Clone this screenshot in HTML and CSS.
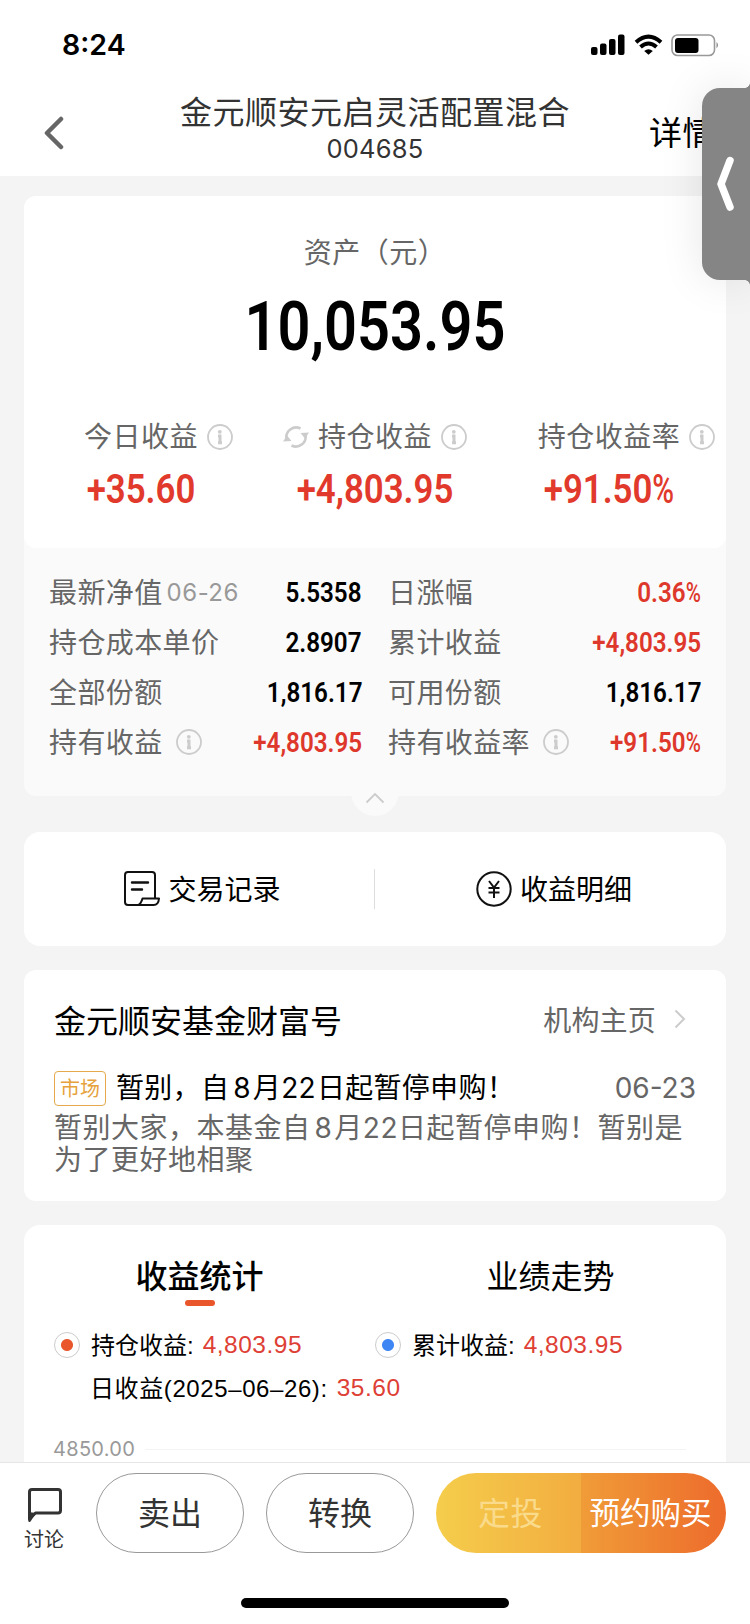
FILE: index.html
```
<!DOCTYPE html>
<html lang="zh-CN">
<head>
    <meta charset="UTF-8">
    <meta name="viewport" content="width=device-width, initial-scale=1.0">
    <title>金元顺安元启灵活配置混合</title>
    <link rel="stylesheet" href="styles.css">
</head>
<body>
    <svg class="defs" width="0" height="0">
        <symbol id="info" viewBox="0 0 26 26">
            <circle cx="13" cy="13" r="12" fill="none" stroke="#ccc" stroke-width="1.8"/>
            <circle cx="12.800" cy="7.800" r="1.9" fill="#ccc"/>
            <path d="M11 12H13V19M11 18.800H15" fill="none" stroke="#ccc" stroke-width="3"/>
        </symbol>
    </svg>

    <header class="header">
        <div class="statusBar">
            <span class="time">8:24</span>
            <div class="statusIcons">
                <svg width="34" height="22" viewBox="0 0 34 22">
                    <rect x="0" y="13" width="6.5" height="8" rx="2"/>
                    <rect x="9" y="9.5" width="6.5" height="11.5" rx="2"/>
                    <rect x="18" y="5" width="6.5" height="16" rx="2"/>
                    <rect x="27" y="0.5" width="6.5" height="20.5" rx="2"/>
                </svg>
                <svg class="wifi" width="29" height="22" viewBox="0 0 29 22">
                    <path d="M2 8.2Q14.500 -3 27 8.200M6.500 13Q14.500 6 22.500 13" fill="none" stroke="#000" stroke-width="4"/>
                    <path d="M14.500 20.800L10.200 17Q14.500 13.400 18.800 17Z"/>
                </svg>
                <svg width="49" height="23" viewBox="0 0 49 23">
                    <rect x="1" y="1" width="42.500" height="20.500" rx="5.500" fill="none" stroke="#999" stroke-width="1.600"/>
                    <rect x="4" y="4" width="23.500" height="15" rx="3"/>
                    <path d="M45.500 8Q48.500 11.200 45.500 14.500Z" fill="#888"/>
                </svg>
            </div>
        </div>
        <div class="navBar">
            <svg class="back" width="20" height="34" viewBox="0 0 20 34">
                <path d="M17 3L3 17L17 31" fill="none" stroke="#666" stroke-width="4.500" stroke-linecap="round" stroke-linejoin="round"/>
            </svg>
            <div class="navTitle">
                <h1>金元顺安元启灵活配置混合</h1>
                <p>004685</p>
            </div>
            <span class="navDetail">详情</span>
        </div>
    </header>

    <main class="content">
        <section class="assetCard">
            <div class="assetTop">
                <p class="assetLabel">资产（元）</p>
                <p class="assetValue num">10,053.95</p>
                <div class="stats">
                    <div class="stat">
                        <div class="statLabel">
                            <span></span>
                            <span>今日收益</span>
                            <svg width="26" height="26"><use href="#info"/></svg>
                        </div>
                        <p class="statValue num">+35.60</p>
                    </div>
                    <div class="stat">
                        <div class="statLabel">
                            <svg class="refresh" width="26" height="24" viewBox="0 0 26 24">
                                <path d="M3.500 14A9.800 9.800 0 0 1 17.500 3.500M22.500 10A9.800 9.800 0 0 1 8.500 20.500" fill="none" stroke="#ccc" stroke-width="2.600"/>
                                <path d="M0 16.500L4 10.500L8.500 16Z M26 7.500L22 13.500L17.500 8Z" fill="#ccc"/>
                            </svg>
                            <span>持仓收益</span>
                            <svg width="26" height="26"><use href="#info"/></svg>
                        </div>
                        <p class="statValue num">+4,803.95</p>
                    </div>
                    <div class="stat">
                        <div class="statLabel">
                            <span></span>
                            <span>持仓收益率</span>
                            <svg width="26" height="26"><use href="#info"/></svg>
                        </div>
                        <p class="statValue num">+91.50<span class="pct">%</span></p>
                    </div>
                </div>
            </div>
            <div class="details">
                <div class="detail"><span>最新净值</span><small>06-26</small><b class="num">5.5358</b></div>
                <div class="detail"><span>日涨幅</span><b class="num red">0.36<span class="pct">%</span></b></div>
                <div class="detail"><span>持仓成本单价</span><b class="num">2.8907</b></div>
                <div class="detail"><span>累计收益</span><b class="num red">+4,803.95</b></div>
                <div class="detail"><span>全部份额</span><b class="num">1,816.17</b></div>
                <div class="detail"><span>可用份额</span><b class="num">1,816.17</b></div>
                <div class="detail"><span>持有收益</span><svg width="26" height="26"><use href="#info"/></svg><b class="num red">+4,803.95</b></div>
                <div class="detail"><span>持有收益率</span><svg width="26" height="26"><use href="#info"/></svg><b class="num red">+91.50<span class="pct">%</span></b></div>
            </div>
            <div class="collapse">
                <svg width="20" height="12" viewBox="0 0 20 12">
                    <path d="M1.500 10.500L10 2L18.500 10.500" fill="none" stroke="#ccc" stroke-width="1.800"/>
                </svg>
            </div>
        </section>

        <section class="links">
            <a class="link">
                <svg width="36" height="36" viewBox="0 0 36 36" fill="none" stroke="#111" stroke-width="2" stroke-linejoin="round">
                    <path d="M31 27V4Q31 1 28 1H4Q1 1 1 4V31Q1 34 4 34H14Q17 33 18.500 27.500H35Q34.500 34 29.500 34H13"/>
                    <path d="M8 11.500H24M8 18.500H18" stroke-width="2.400" stroke-linecap="round"/>
                </svg>
                <span>交易记录</span>
            </a>
            <a class="link">
                <svg width="36" height="36" viewBox="0 0 36 36" fill="none" stroke="#111" stroke-width="2">
                    <circle cx="18" cy="18" r="16.700"/>
                    <path d="M13 10L18 16.500L23 10M18 16.500V27M12.500 17H23.500M12.500 21.500H23.500"/>
                </svg>
                <span>收益明细</span>
            </a>
        </section>

        <section class="news">
            <div class="newsHead">
                <h2>金元顺安基金财富号</h2>
                <span class="more">机构主页</span>
                <svg width="12" height="20" viewBox="0 0 12 20">
                    <path d="M1.500 1.500L10 10L1.500 18.500" fill="none" stroke="#ccc" stroke-width="2"/>
                </svg>
            </div>
            <div class="newsTitle">
                <span class="tag">市场</span>
                <h3>暂别，自<span class="month">8</span>月<span class="day">22</span>日起暂停申购！</h3>
                <time>06-23</time>
            </div>
            <p class="newsText">暂别大家，本基金自<span class="month">8</span>月22日起暂停申购！暂别是为了更好地相聚</p>
        </section>

        <section class="chart">
            <div class="tabs">
                <span class="tab active">收益统计</span>
                <span class="tab">业绩走势</span>
            </div>
            <div class="legend">
                <div class="legendItem"><i class="dot orange"></i><span>持仓收益:</span><em>4,803.95</em></div>
                <div class="legendItem"><i class="dot blue"></i><span>累计收益:</span><em>4,803.95</em></div>
                <div class="legendItem daily"><span>日收益(2025–06–26):</span><em>35.60</em></div>
            </div>
            <div class="axis"><span>4850.00</span></div>
        </section>
    </main>

    <footer class="footer">
        <div class="actions">
            <div class="discuss">
                <svg width="36" height="36" viewBox="0 0 36 36">
                    <path d="M2.500 32V5Q2.500 2.500 5 2.500H31Q33.500 2.500 33.500 5V23.500Q33.500 26 31 26H8.500Z" fill="none" stroke="#333" stroke-width="3" stroke-linejoin="round"/>
                    <path d="M1.200 25L9 26L3.500 34.500Q1.200 36 1.200 33Z" fill="#333"/>
                </svg>
                讨论
            </div>
            <button class="btn">卖出</button>
            <button class="btn">转换</button>
            <div class="buy">
                <button class="plan">定投</button>
                <button class="reserve">预约购买</button>
            </div>
        </div>
        <div class="homeBar"></div>
    </footer>

    <div class="sideTab">
        <svg width="20" height="56" viewBox="0 0 20 56">
            <path d="M14 4.500L5 28L14 51" fill="none" stroke="#fff" stroke-width="7.500" stroke-linecap="round" stroke-linejoin="round"/>
        </svg>
    </div>
</body>
</html>
```
FILE: styles.css
```
* {
    box-sizing: border-box;
    margin: 0;
    padding: 0;
}

body {
    display: flex;
    flex-direction: column;
    position: relative;
    width: 750px;
    height: 1624px;
    overflow: hidden;
    background: #f4f4f4;
    color: #000;
    font-family: Inter, "Noto Sans CJK SC", sans-serif;
    font-size: 28px;
    font-weight: 390;
    letter-spacing: 0.5px;
}

h1, h2, h3, b, i, em, small {
    font-weight: inherit;
    font-style: normal;
}

svg {
    display: block;
    flex: none;
}

button {
    border: none;
    background: none;
    font: inherit;
    letter-spacing: inherit;
}

.defs {
    position: absolute;
}

.header {
    height: 176px;
    background: #fff;
}

.statusBar {
    display: flex;
    justify-content: space-between;
    height: 92px;
    padding: 33px 30px 0 62px;
}

.time {
    font-size: 28.5px;
    font-weight: 600;
    line-height: 24px;
    letter-spacing: 0;
}

.statusIcons {
    display: flex;
    margin-top: 1px;
}

.wifi {
    margin: 0 8px 0 9px;
}

.navBar {
    display: grid;
    grid-template-columns: 150px 1fr 150px;
    align-items: center;
    height: 82px;
}

.back {
    margin-left: 44px;
}

.navTitle {
    padding-bottom: 9px;
    text-align: center;
    color: #333;
}

.navTitle h1 {
    font-size: 32px;
    line-height: 40px;
}

.navTitle p {
    font-size: 25.5px;
    line-height: 32px;
    letter-spacing: 0.2px;
}

.navDetail {
    margin-left: 49px;
    padding-bottom: 4px;
    font-size: 33px;
}

.content {
    flex: 1;
    min-height: 0;
    padding: 20px 24px 0;
    overflow: hidden;
}

/* narrow digits for amounts */
.num {
    font-family: Roboto, sans-serif;
    font-weight: 600;
    letter-spacing: 0;
    transform: scaleX(0.85);
}

.pct {
    display: inline-block;
    font-weight: 500;
    transform: scaleX(0.85);
    transform-origin: left;
    margin-right: -0.11em;
}

.red {
    color: #de382c;
}

.assetCard {
    position: relative;
    height: 600px;
    border-radius: 12px;
    background: #fafafa;
}

.assetTop {
    height: 352px;
    padding-top: 37px;
    border-radius: 12px;
    background: #fff;
    text-align: center;
}

.assetLabel {
    line-height: 40px;
    color: #666;
}

.assetValue {
    margin-top: 14px;
    font-size: 68px;
    line-height: 80px;
}

.stats {
    display: grid;
    grid-template-columns: repeat(3, 1fr);
    margin-top: 50px;
}

.statLabel {
    display: grid;
    grid-template-columns: 1fr auto 1fr;
    align-items: center;
    gap: 9px;
    line-height: 40px;
    color: #666;
}

.refresh {
    justify-self: end;
}

.statValue {
    margin-top: 5px;
    font-size: 41px;
    line-height: 54px;
    color: #e1392b;
}

.details {
    display: grid;
    grid-template-columns: 313px 313px;
    gap: 0 26px;
    padding: 19px 25px 0;
}

.detail {
    display: flex;
    align-items: center;
    height: 50px;
    color: #666;
}

.detail > span {
    padding-bottom: 2px;
    letter-spacing: 0.4px;
}

.detail small {
    margin-left: 4px;
    font-size: 24px;
    color: #999;
}

.detail svg {
    margin-left: 13px;
}

.detail .num {
    margin-left: auto;
    transform-origin: right;
    font-size: 28.5px;
    color: #000;
}

.detail .red {
    color: #de382c;
}

.collapse {
    position: absolute;
    left: 327px;
    bottom: -20px;
    display: flex;
    align-items: flex-end;
    justify-content: center;
    width: 48px;
    height: 48px;
    padding-bottom: 12px;
    border-radius: 50%;
    background: #fafafa;
}

.links {
    display: grid;
    grid-template-columns: 350px 1fr;
    align-items: center;
    height: 114px;
    margin-top: 36px;
    border-radius: 16px;
    background: #fff;
}

.link {
    display: flex;
    align-items: center;
    justify-content: center;
    gap: 8px;
    height: 40px;
    padding-left: 7px;
    letter-spacing: 0;
}

.link span {
    padding-bottom: 2px;
}

.link + .link {
    border-left: 1px solid #ddd;
}

.news {
    height: 231px;
    margin-top: 24px;
    padding: 27px 30px 0;
    border-radius: 12px;
    background: #fff;
}

.newsHead {
    display: flex;
    align-items: center;
    height: 44px;
    padding-right: 10px;
}

.newsHead h2 {
    font-size: 32px;
    letter-spacing: 0;
}

.more {
    margin-left: auto;
    margin-right: 18px;
    color: #666;
    letter-spacing: 0.2px;
}

.newsTitle {
    display: flex;
    align-items: center;
    height: 36px;
    margin-top: 29px;
}

.tag {
    width: 52px;
    height: 35px;
    margin-right: 10px;
    border: 1px solid #e6a94c;
    border-radius: 4px;
    font-size: 20px;
    line-height: 35px;
    letter-spacing: 0;
    text-align: center;
    color: #e6a23c;
}

.newsTitle h3 {
    font-size: 28px;
    line-height: 32px;
    letter-spacing: 0.3px;
}

.month {
    margin: 0 2px 0 4px;
}

.day {
    margin: 0 1px 0 0;
}

.newsTitle time {
    margin-left: auto;
    color: #666;
    letter-spacing: 0;
}

.newsText {
    margin-top: 6px;
    line-height: 32px;
    color: #666;
}

.chart {
    height: 300px;
    margin-top: 24px;
    border-radius: 16px;
    background: #fff;
}

.tabs {
    display: grid;
    grid-template-columns: 1fr 1fr;
    padding-top: 29px;
}

.tab {
    display: flex;
    flex-direction: column;
    align-items: center;
    font-size: 32px;
    line-height: 46px;
    letter-spacing: 0;
}

.active {
    font-weight: 500;
}

.active::after {
    content: "";
    width: 30px;
    height: 6px;
    border-radius: 3px;
    background: #e9562b;
}

.legend {
    display: grid;
    grid-template-columns: 321px 1fr;
    padding: 17px 30px 0;
    font-family: "Liberation Sans", "Noto Sans CJK SC", sans-serif;
    font-size: 24px;
    letter-spacing: 0;
}

.legendItem {
    display: flex;
    align-items: center;
    height: 43px;
}

.legendItem span {
    padding-bottom: 2px;
}

.legendItem em {
    margin-left: 9px;
    font-size: 24.5px;
    letter-spacing: 0.5px;
    color: #de4035;
}

.daily {
    grid-column: 1 / 3;
    padding-left: 36px;
    letter-spacing: 0.6px;
}

.dot {
    width: 26px;
    height: 26px;
    margin-right: 11px;
    border: 1px solid #ccc;
    border-radius: 50%;
}

.orange {
    background: radial-gradient(circle, #e9562b 5.5px, #fff 6.5px);
}

.blue {
    background: radial-gradient(circle, #3d86f4 5.5px, #fff 6.5px);
}

.axis {
    display: flex;
    align-items: center;
    gap: 10px;
    margin-top: 25px;
    padding: 0 40px 0 29px;
    font-size: 20px;
    line-height: 30px;
    letter-spacing: 0.3px;
    color: #999;
}

.axis::after {
    content: "";
    flex: 1;
    height: 1px;
    background: #f4f4f4;
}

.footer {
    height: 162px;
    border-top: 1px solid #e6e6e6;
    background: #fff;
}

.actions {
    display: flex;
    height: 90px;
    padding: 10px 24px 0;
}

.discuss {
    width: 40px;
    margin-right: 32px;
    padding: 14px 0 0;
    font-size: 20px;
    line-height: 34px;
    letter-spacing: 0;
    color: #333;
}

.discuss svg {
    margin-left: 3px;
}

.btn {
    width: 148px;
    height: 80px;
    margin-right: 22px;
    padding-bottom: 4px;
    border: 1px solid #999;
    border-radius: 40px;
    font-size: 32px;
    letter-spacing: 0;
    color: #333;
}

.buy {
    display: flex;
    width: 290px;
    height: 80px;
    overflow: hidden;
    border-radius: 40px;
}

.plan,
.reserve {
    width: 145px;
    padding-bottom: 4px;
    font-size: 32px;
    color: #fff;
}

.plan {
    padding-left: 4px;
    background: linear-gradient(90deg, #f5cd4b, #f2ad40);
    color: #fadb8c;
}

.reserve {
    padding-right: 6px;
    background: linear-gradient(90deg, #f09c38, #ed6b2c);
    font-size: 30.5px;
    letter-spacing: 0;
}

.homeBar {
    width: 268px;
    height: 10px;
    margin: 45px auto 0;
    border-radius: 5px;
    background: #000;
}

.sideTab {
    position: absolute;
    top: 88px;
    right: 0;
    display: flex;
    align-items: center;
    width: 48px;
    height: 192px;
    padding-left: 14px;
    border-radius: 18px 0 0 18px;
    background: #858585;
    box-shadow: 0 0 44px rgba(0, 0, 0, 0.1);
}

/* small flares where the tab meets the screen edge */
.sideTab::before,
.sideTab::after {
    content: "";
    position: absolute;
    right: 0;
    width: 5px;
    height: 5px;
}

.sideTab::before {
    top: -5px;
    background: radial-gradient(circle at 0 0, transparent 4.5px, #858585 5px);
}

.sideTab::after {
    bottom: -5px;
    background: radial-gradient(circle at 0 100%, transparent 4.5px, #858585 5px);
}
```
